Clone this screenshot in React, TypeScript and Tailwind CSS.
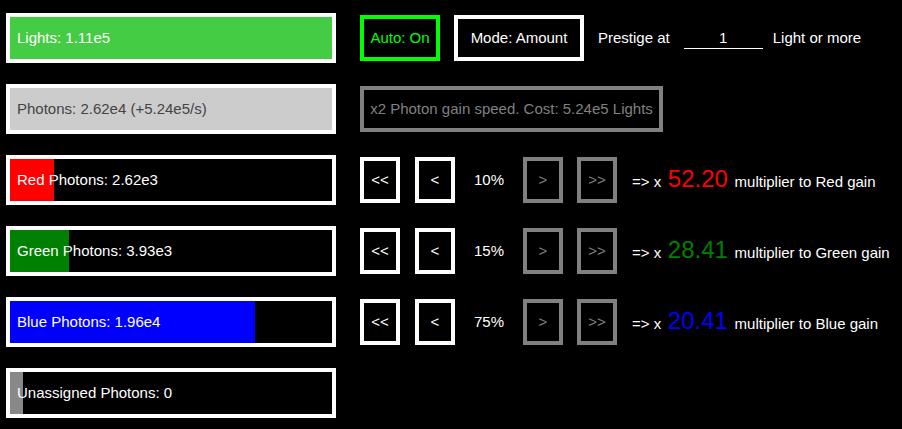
import { ReactNode } from "react";

type Bar = {
    label: string;
    fill: string;
    width: string;
    text?: string;
};

const colorRows = [
    { label: "Red Photons: 2.62e3", fill: "bg-[#ff0000]", width: "w-[44px]", pct: "10%", mult: "52.20", multColor: "text-[#ff0000]", name: "Red" },
    { label: "Green Photons: 3.93e3", fill: "bg-[#008000]", width: "w-[59px]", pct: "15%", mult: "28.41", multColor: "text-[#008000]", name: "Green" },
    { label: "Blue Photons: 1.96e4", fill: "bg-[#0000ff]", width: "w-[245px]", pct: "75%", mult: "20.41", multColor: "text-[#0000ff]", name: "Blue" },
];

function ProgressBar({ label, fill, width, text = "text-white" }: Bar) {
    return (
        <div className="relative w-[330px] h-[50px] shrink-0 border-4 border-white bg-black flex items-center">
            {/* fill behind label */}
            <div className={`absolute left-0 top-0 bottom-0 ${width} ${fill}`} />
            <span className={`relative pl-[7px] ${text}`}>{label}</span>
        </div>
    );
}

function SmallBtn({ children, dim }: { children: ReactNode; dim?: boolean }) {
    return (
        <button
            className={`w-[40px] h-[46px] shrink-0 border-4 bg-black flex items-center justify-center ${
                dim ? "border-[#808080] text-[#808080]" : "border-white text-white"
            }`}
        >
            {children}
        </button>
    );
}

export default function App() {
    return (
        <div className="min-h-screen bg-black text-white text-[15px] font-['Liberation_Sans',Arial,sans-serif] pt-[13px] pl-[6px] flex flex-col gap-[21px]">
            {/* lights + prestige controls */}
            <div className="flex items-center">
                <ProgressBar label="Lights: 1.11e5" fill="bg-[#44cc44]" width="w-full" />
                <button className="ml-[24px] w-[80px] h-[46px] border-4 border-[#00ff00] text-[#00ff00] bg-black">
                    Auto: On
                </button>
                <button className="ml-[14px] w-[130px] h-[46px] border-4 border-white text-white bg-black">
                    Mode: Amount
                </button>
                <span className="ml-[14px]">Prestige at</span>
                <input
                    className="ml-[14px] w-[79px] bg-transparent border-b border-white text-center text-white outline-none leading-[20px]"
                    defaultValue="1"
                />
                <span className="ml-[10px]">Light or more</span>
            </div>

            {/* photons + upgrade */}
            <div className="flex items-center">
                <ProgressBar label="Photons: 2.62e4 (+5.24e5/s)" fill="bg-[#cccccc]" width="w-full" text="text-[#444444]" />
                <button className="ml-[24px] w-[303px] h-[46px] border-4 border-[#808080] text-[#808080] bg-black">
                    x2 Photon gain speed. Cost: 5.24e5 Lights
                </button>
            </div>

            {colorRows.map((r) => (
                <div key={r.name} className="flex items-center">
                    <ProgressBar label={r.label} fill={r.fill} width={r.width} />
                    <div className="ml-[24px] flex items-center gap-[15px]">
                        <SmallBtn>&lt;&lt;</SmallBtn>
                        <SmallBtn>&lt;</SmallBtn>
                        <span className="w-[38px] text-center">{r.pct}</span>
                        <SmallBtn dim>&gt;</SmallBtn>
                        <div className="-ml-px">
                            <SmallBtn dim>&gt;&gt;</SmallBtn>
                        </div>
                        <div className="whitespace-pre">
                            =&gt; x<span className={`text-[24px] leading-none ${r.multColor}`}> {r.mult} </span>multiplier to {r.name} gain
                        </div>
                    </div>
                </div>
            ))}

            <div className="flex items-center">
                <ProgressBar label="Unassigned Photons: 0" fill="bg-[#888888]" width="w-[13px]" />
            </div>
        </div>
    );
}
